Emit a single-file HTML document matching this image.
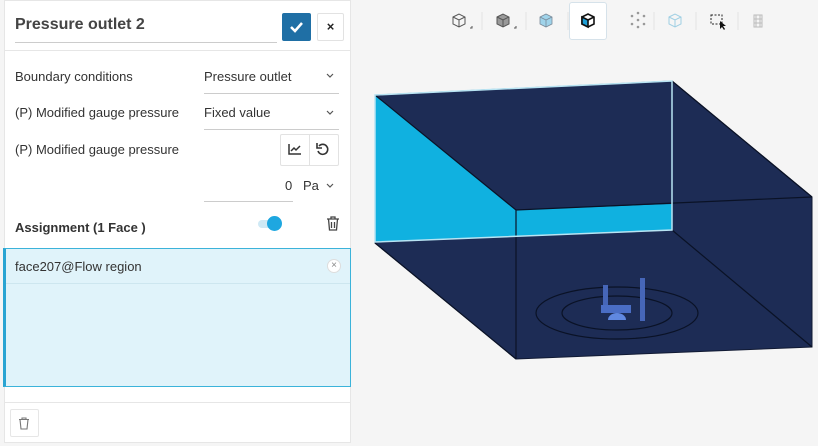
<!DOCTYPE html>
<html><head><meta charset="utf-8"><style>
*{box-sizing:border-box;margin:0;padding:0}
body{width:818px;height:446px;background:#f5f5f5;font-family:"Liberation Sans",sans-serif;color:#333;position:relative;overflow:hidden}
.panel{position:absolute;left:4px;top:0;width:347px;height:443px;background:#fff;border:1px solid #e6e6e6}
.abs{position:absolute}
.lbl{font-size:13px;color:#333}
.sel{font-size:13px;color:#333}
.line{position:absolute;height:1px;background:#ccc}
</style></head><body>
<div class="panel"></div>
<div class="abs" style="left:15px;top:16px;font-size:16px;font-weight:bold;color:#444">Pressure outlet 2</div>
<div class="line" style="left:15px;top:42px;width:262px"></div>
<div class="abs" style="left:282px;top:13px;width:29px;height:28px;background:#1f6fa5;border-radius:2px"><svg width="29" height="28"><path d="M9 14l4 4 7-8" stroke="#fff" stroke-width="2.5" fill="none"/></svg></div>
<div class="abs" style="left:317px;top:13px;width:27px;height:28px;border:1px solid #e2e2e2;border-radius:2px;font-size:13px;font-weight:bold;text-align:center;line-height:26px;color:#222">×</div>
<div class="line" style="left:5px;top:50px;width:345px;background:#e6e6e6"></div>

<div class="abs lbl" style="left:15px;top:69px">Boundary conditions</div>
<div class="abs sel" style="left:204px;top:69px">Pressure outlet</div>
<svg class="abs" style="left:326px;top:73px" width="8" height="6"><path d="M1 1l3 3 3-3" stroke="#555" stroke-width="1.2" fill="none"/></svg>
<div class="line" style="left:204px;top:93px;width:135px"></div>

<div class="abs lbl" style="left:15px;top:105px">(P) Modified gauge pressure</div>
<div class="abs sel" style="left:204px;top:105px">Fixed value</div>
<svg class="abs" style="left:326px;top:110px" width="8" height="6"><path d="M1 1l3 3 3-3" stroke="#555" stroke-width="1.2" fill="none"/></svg>
<div class="line" style="left:204px;top:129px;width:135px"></div>

<div class="abs lbl" style="left:15px;top:142px">(P) Modified gauge pressure</div>
<div class="abs" style="left:280px;top:134px;width:59px;height:32px;border:1px solid #e2e2e2;border-radius:2px"></div>
<div class="abs" style="left:309px;top:134px;width:1px;height:32px;background:#e2e2e2"></div>
<svg class="abs" style="left:288px;top:143px" width="14" height="12"><path d="M1 1v10h12M3 8l3-3 2 2 4-4" stroke="#333" stroke-width="1.5" fill="none"/></svg>
<svg class="abs" style="left:316px;top:142px" width="14" height="14"><path d="M3 4a5 5 0 1 1-1 5" stroke="#333" stroke-width="1.6" fill="none"/><path d="M1 1v5h5" stroke="#333" stroke-width="1.6" fill="none"/></svg>
<div class="abs" style="left:285px;top:178px;font-size:13px">0</div>
<div class="abs" style="left:303px;top:178px;font-size:13px">Pa</div>
<svg class="abs" style="left:326px;top:183px" width="8" height="6"><path d="M1 1l3 3 3-3" stroke="#555" stroke-width="1.2" fill="none"/></svg>
<div class="line" style="left:204px;top:201px;width:89px"></div>

<div class="abs" style="left:15px;top:220px;font-size:13px;font-weight:bold;color:#333">Assignment (1 Face )</div>
<div class="abs" style="left:258px;top:220px;width:20px;height:8px;border-radius:4px;background:#cfe9f5"></div>
<div class="abs" style="left:267px;top:216px;width:15px;height:15px;border-radius:50%;background:#1ea7e0"></div>
<svg class="abs" style="left:326px;top:216px" width="14" height="15"><path d="M1 3h12M5 3V1h4v2M2.5 3l1 11h7l1-11M5.5 6v6M8.5 6v6" stroke="#444" stroke-width="1.3" fill="none"/></svg>

<div class="abs" style="left:3px;top:248px;width:348px;height:139px;background:#e0f3fa;border:1px solid #3bb3da;border-left:3px solid #2aa4d2"></div>
<div class="abs" style="left:15px;top:259px;font-size:13px;color:#333">face207@Flow region</div>
<div class="line" style="left:6px;top:283px;width:344px;background:#cde6ef"></div>
<div class="abs" style="left:327px;top:259px;width:14px;height:14px;border-radius:50%;background:#fff;border:1px solid #ddd;font-size:10px;line-height:12px;text-align:center;color:#888">×</div>
<div class="line" style="left:5px;top:402px;width:345px;background:#e6e6e6"></div>
<div class="abs" style="left:10px;top:409px;width:29px;height:28px;border:1px solid #e6e6e6;border-radius:2px"></div>
<svg class="abs" style="left:18px;top:417px" width="12" height="13"><path d="M1 2.5h10M4 2.5V1h4v1.5M2 2.5l1 9.5h6l1-9.5" stroke="#777" stroke-width="1.1" fill="none"/></svg>

<div class="abs" style="left:569px;top:2px;width:38px;height:38px;background:#fff;border:1px solid #d6e2ea;border-radius:3px"></div>
<svg class="abs" style="left:440px;top:0" width="340" height="50">
<g fill="none" stroke="#555" stroke-width="1">
<path d="M13 17l6-3 6 3v7l-6 3-6-3z M13 17l6 3 6-3 M19 20v7"/>
<path d="M30 28h2v-2" />
</g>
<g stroke="#555"><path d="M57 17l6-3 6 3v7l-6 3-6-3z" fill="#999"/><path d="M57 17l6 3 6-3M63 20v7" fill="none"/><path d="M74 28h2v-2" fill="none"/></g>
<g stroke="#7a8a99" stroke-width="0.8"><path d="M100 17l6-3 6 3v7l-6 3-6-3z" fill="#9fd3ea"/><path d="M100 17l6 3 6-3M106 20v7" fill="none"/></g>
<g stroke="#111" stroke-width="1.6"><path d="M142 17l6-3 6 3v7l-6 3-6-3z" fill="#fff"/><path d="M142 17l6 3v7l-6-3z" fill="#1e9fd6"/><path d="M148 20l6-3" fill="none"/></g>
<g fill="#999"><circle cx="192" cy="16" r="1.3"/><circle cx="198" cy="13" r="1.3"/><circle cx="204" cy="16" r="1.3"/><circle cx="192" cy="24" r="1.3"/><circle cx="198" cy="27" r="1.3"/><circle cx="204" cy="24" r="1.3"/><circle cx="198" cy="20" r="1.3"/></g>
<g stroke="#9fcfe3" fill="none"><path d="M229 17l6-3 6 3v7l-6 3-6-3z M229 17l6 3 6-3M235 20v7"/></g>
<rect x="271" y="15" width="11" height="9" fill="none" stroke="#222" stroke-dasharray="2 1.5"/>
<path d="M280 21l0 8 2-2 2 3 1-1-2-3 3 0z" fill="#111"/>
<g stroke="#bbb" fill="none"><path d="M314 15h8v12h-8z M316 15v12M320 15v12M314 19h8M314 23h8"/></g>
<g stroke="#e2e2e2"><path d="M42 12v18M86 12v18M128 12v18M214 12v18M256 12v18M298 12v18"/></g>
</svg>

<svg class="abs" style="left:0;top:0" width="818" height="446">
<polygon points="375,95 672,81 812,197 812,347 516,359 375,243" fill="#1d2c55" stroke="#111a33" stroke-width="1"/>
<polygon points="375,95 516,210 516,236 375,242" fill="#10b1e0"/>
<polygon points="516,210 672,204 672,230 516,236" fill="#10b1e0"/>
<g stroke="#0a1226" stroke-width="1.2" fill="none">
<path d="M375,95 L516,210 L812,197 M516,210 L516,359 M672,81 L812,197 M672,230 L812,347 M375,243 L516,359"/>
<ellipse cx="617" cy="313" rx="81" ry="26"/>
<ellipse cx="617" cy="313" rx="55" ry="17"/>
</g>
<polygon points="375,95 672,81 672,230 375,242" fill="none" stroke="#b8e4f3" stroke-width="1.5"/>
<rect x="603" y="285" width="5" height="22" fill="#4666b8"/>
<rect x="640" y="278" width="5" height="43" fill="#4666b8"/>
<rect x="601" y="305" width="30" height="8" fill="#4a6dc4"/>
<path d="M608 320a9 7 0 0 1 18 0z" fill="#6088e0"/>
</svg>
</body></html>
